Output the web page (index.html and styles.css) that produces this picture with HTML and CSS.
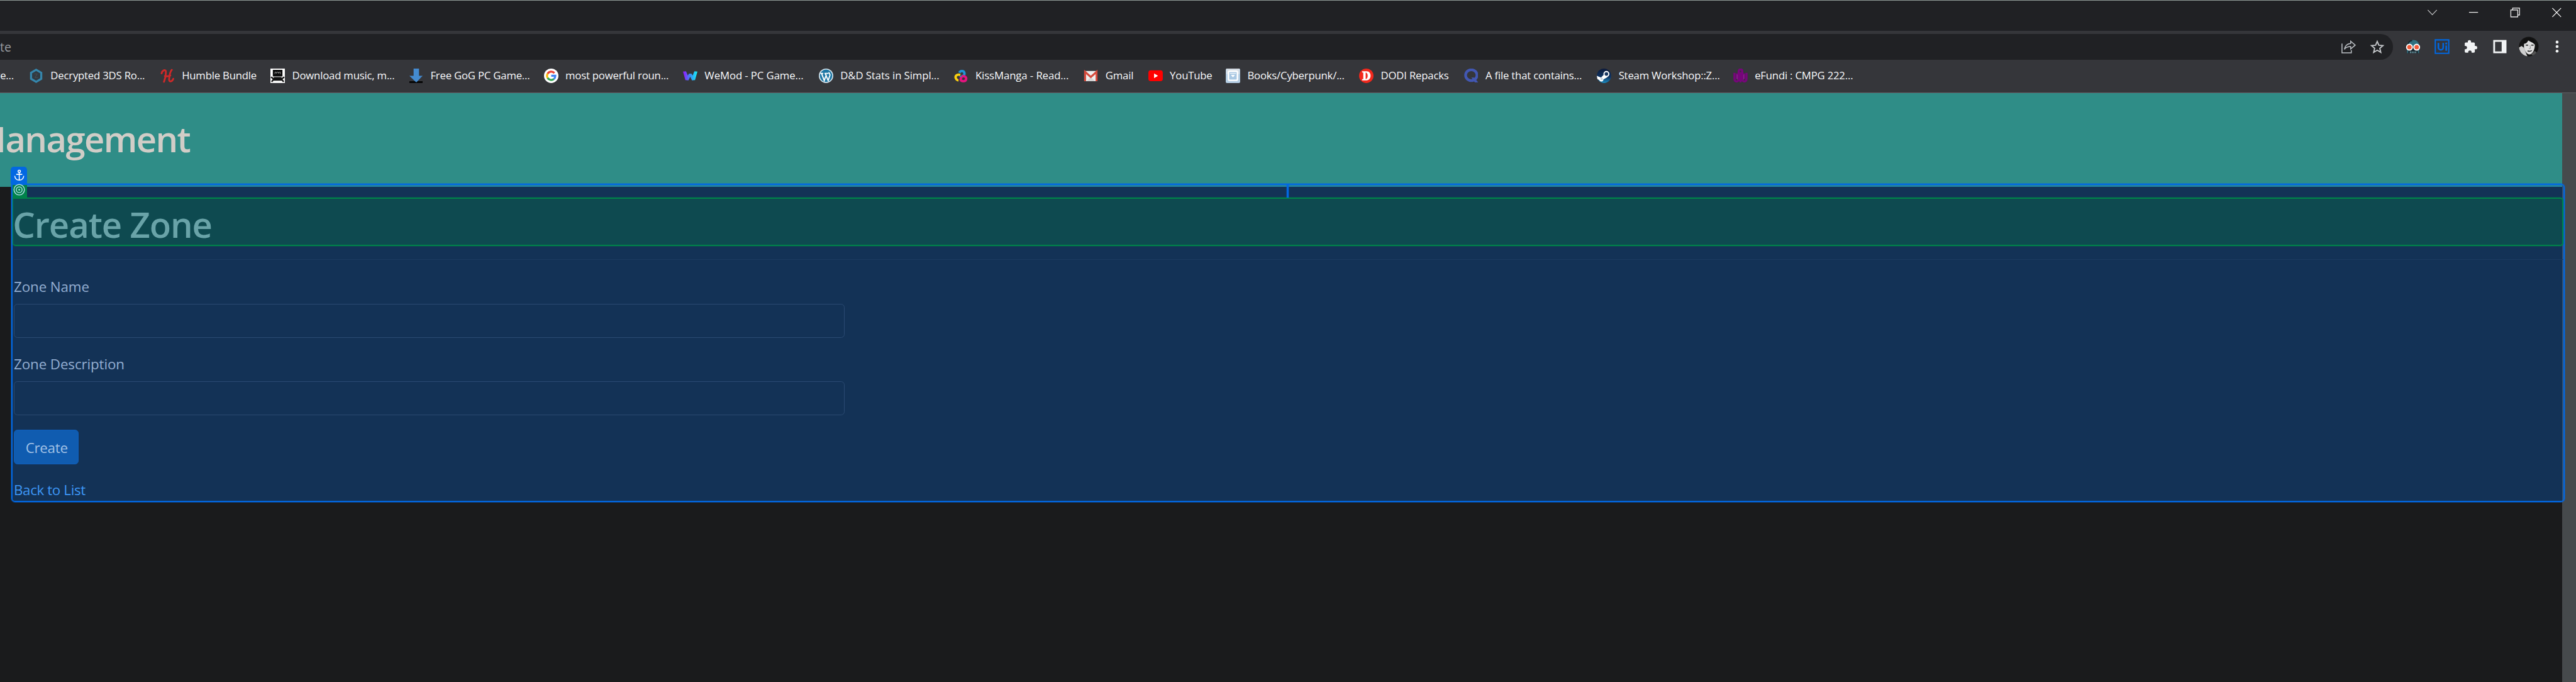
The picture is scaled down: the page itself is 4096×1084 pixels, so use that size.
FILE: index.html
```html
<!DOCTYPE html>
<html lang="en">
<head>
<meta charset="utf-8">
<title>Create Zone</title>
<link rel="stylesheet" href="styles.css">
</head>
<body>
<div class="window">
  <div class="titlebar">
    <svg class="ctl" viewBox="0 0 65 49"><path d="M25.500 15.500l7.500 8 7.500-8"/></svg>
    <svg class="ctl ctl-bright" viewBox="0 0 65 49"><path d="M25 19.500h15"/></svg>
    <svg class="ctl ctl-bright" viewBox="0 0 65 49"><path d="M25.500 15.500h11.500v11.500h-11.500zM28.500 15.500v-3h11.500v11.500h-3"/></svg>
    <svg class="ctl ctl-bright" viewBox="0 0 65 49"><path d="M25.500 12.500l14.500 14.500M40 12.500l-14.500 14.500"/></svg>
  </div>
  <div class="toolbar">
    <div class="omnibox">
      <span class="url">te</span>
      <svg class="tool" viewBox="0 0 48 42"><path d="M13.500 16v15.500H29V27" fill="none" stroke="#bdc1c6" stroke-width="1.600"/><path d="M28 12l7.500 6.500-7.500 6.500v-4c-5 0-8 1-10.500 4.500 .800-5.500 4-9 10.500-9.800z" fill="none" stroke="#bdc1c6" stroke-width="1.600"/></svg>
      <svg class="tool" viewBox="0 0 48 42"><path d="M24 12.500l2.700 6.300 6.800.600-5.200 4.500 1.600 6.700-5.900-3.600-5.900 3.600 1.600-6.700-5.200-4.500 6.800-.600z" fill="none" stroke="#c4c7ca" stroke-width="2"/></svg>
    </div>
    <div class="extensions">
      <svg class="tool" viewBox="0 0 48 42"><path d="M14 19c0-5.500 4.500-9 10-9s10 3.500 10 9v2H14z" fill="#30707f"/><path d="M15.500 17c1-4 4-6 7-6" stroke="#16232b" stroke-width="2" fill="none"/><path d="M14 24h20v8H14z" fill="#17242c"/><path d="M14 25v7h2v-7zM32 25v7h2v-7z" fill="#30707f"/><path d="M19.500 29v3M22.500 29v3M25.500 29v3M28.500 29v3" stroke="#7fb3bd" stroke-width="1.500"/><circle cx="18" cy="22" r="4.700" fill="#f15a38" stroke="#fff" stroke-width="2"/><circle cx="30" cy="22" r="4.700" fill="#f15a38" stroke="#fff" stroke-width="2"/></svg>
      <svg class="tool" viewBox="0 0 48 42"><path d="M12.800 9.800h22.400v22.400H12.800z" fill="none" stroke="#0067df" stroke-width="2.200"/><path d="M18 15v7.500a4 4 0 0 0 8 0V15M31 19v9" fill="none" stroke="#0067df" stroke-width="2.700"/><circle cx="31" cy="15.700" r="1.700" fill="#0067df"/></svg>
      <svg class="tool" viewBox="0 0 48 42"><path d="M31.800 20h-1.300v-4.200a1.800 1.800 0 0 0-1.800-1.800h-4.500v-1.200a2.700 2.700 0 0 0-5.400 0V14h-3.300a1.800 1.800 0 0 0-1.800 1.800v4h1a2.800 2.800 0 0 1 0 5.600h-1v4a1.800 1.800 0 0 0 1.800 1.800h4v-1a2.800 2.800 0 0 1 5.600 0v1h3.600a1.800 1.800 0 0 0 1.800-1.800v-4h1.300a2.700 2.700 0 0 0 0-5.400z" fill="#f1f3f4"/></svg>
      <svg class="tool" viewBox="0 0 48 42"><path d="M13 10h22v22H13z" fill="#f1f3f4"/><path d="M16 13h11v16H16z" fill="#35363a"/></svg>
      <svg class="tool" viewBox="0 0 48 42"><defs><clipPath id="face"><circle cx="24" cy="21" r="16.300"/></clipPath></defs><g clip-path="url(#face)"><path d="M7 4h34v34H7z" fill="#141414"/><path d="M16 14c3-2 5-3 8-3 5 0 10 2 10 8 0 7-4 15-9 15-4 0-8-6-9-11z" fill="#dedede"/><path d="M7 23l5-3 4 3 3 8 3 7H13z" fill="#cfcfcf"/><path d="M14 16c4 1 8-1 9-6 3 4 9 4 11 8l-1-8-8-4-9 3z" fill="#101010"/><path d="M19 18.500h4M28 18.500h4M22 28c3 1.500 5 1 7-.500" stroke="#222" stroke-width="1.500" fill="none"/><path d="M26 19l1 5h-3" stroke="#8a8a8a" fill="none"/><path d="M28 34l6-6 5 5-4 6z" fill="#555"/></g></svg>
      <svg class="tool" viewBox="0 0 48 42"><g fill="#f1f3f4"><circle cx="24" cy="13.500" r="2.400"/><circle cx="24" cy="21" r="2.400"/><circle cx="24" cy="28.500" r="2.400"/></g></svg>
    </div>
  </div>
  <div class="bookmarks">
    <div class="bm bm-cut"><span>re...</span></div>
    <div class="bm"><svg viewBox="0 0 24 24"><path d="M12 2l8.500 5v10L12 22l-8.500-5V7z" fill="#303a42" stroke="#3586ac" stroke-width="3.400"/><path d="M9 9h5l-4 6h5" fill="none" stroke="#4a4f54"/></svg><span>Decrypted 3DS Ro...</span></div>
    <div class="bm"><svg viewBox="0 0 24 24"><path d="M2 8C3 3 8 1 9 4c.500 5-1 13-3 18M19 2c-3 3-4 10-4.500 16 0 5 5 4 7-1M7.500 12.500c4 1 6 0 9-1" fill="none" stroke="#cf2929" stroke-width="3" stroke-linecap="round"/></svg><span>Humble Bundle</span></div>
    <div class="bm"><svg viewBox="0 0 24 24"><path d="M0 0h24v24H0z" fill="#fff"/><path d="M4 2h16v11H4zM6 14h12l1 2H5z" fill="#0a0a0a"/><path d="M7.500 9V6h2l.500 2 1-2h2l.500 2 1-2h2v3" fill="none" stroke="#999"/><path d="M1 14l4 3h14l4-3M2 22l4-5M22 22l-4-5M5 19h14" stroke="#111" stroke-width="2.500" fill="none"/></svg><span>Download music, m...</span></div>
    <div class="bm"><svg viewBox="0 0 24 24"><path d="M1 21h22v3H1z" fill="#050505"/><path d="M8 0h9v12h6L12.500 23 1 12h7z" fill="#448bd0"/></svg><span>Free GoG PC Game...</span></div>
    <div class="bm"><svg viewBox="0 0 24 24"><circle cx="12" cy="12" r="12" fill="#fff"/><g fill="none" stroke-width="3.400"><path d="M17.300 7.400A7 7 0 0 0 6 8.500" stroke="#ea4335"/><path d="M6 8.500a7 7 0 0 0 0 7" stroke="#fbbc05"/><path d="M6 15.500a7 7 0 0 0 10.500 1.800" stroke="#34a853"/><path d="M16.500 17.300A7 7 0 0 0 18.800 12H12" stroke="#4285f4"/></g></svg><span>most powerful roun...</span></div>
    <div class="bm bm-wide"><svg viewBox="0 0 24 24"><defs><linearGradient id="wm"><stop offset="0" stop-color="#9a10ff"/><stop offset=".5" stop-color="#3b8cf5"/><stop offset="1" stop-color="#12f4f6"/></linearGradient></defs><path d="M0 5l5-.500 3 7 2-3h4l2 3 3-7 5 .500-4 14-5 .500-3-6-3 6-5-.500z" fill="url(#wm)"/></svg><span>WeMod - PC Game...</span></div>
    <div class="bm bm-wide"><svg viewBox="0 0 24 24"><circle cx="12" cy="12" r="12" fill="#d4e5ee"/><circle cx="12" cy="12" r="10.300" fill="#1b76a4"/><path d="M2.500 8h5M9.500 8h6.500M4.500 8l4.500 12 3.500-10M10.500 8l5 12 3-9c.500-2-2-3-1.500-5" fill="none" stroke="#fff" stroke-width="2"/></svg><span>D&amp;D Stats in Simpl...</span></div>
    <div class="bm bm-wide"><svg viewBox="0 0 24 24"><g fill="none" stroke-width="4"><path d="M10 7a4.300 4.300 0 1 1 5 5.500l-4 2" stroke="#1f95d6"/><path d="M11.500 10.500C5 9 2 13 4.500 17c1 2 3 2.500 4 2.500" stroke="#f8cf10"/><path d="M14 13c5-1 8 1 7 5s-8 4-9 0c0-2 1-3 2-4" stroke="#e5147f"/></g></svg><span>KissManga - Read...</span></div>
    <div class="bm"><svg viewBox="0 0 24 24"><path d="M1 4h22v17H1z" fill="#eee"/><path d="M5 21l7-7 7 7z" fill="#d5d5d5"/><path d="M2.500 21V5.500L12 14l9.500-8.500V21" fill="none" stroke="#d54b3d" stroke-width="3.200"/></svg><span>Gmail</span></div>
    <div class="bm"><svg viewBox="0 0 24 24"><rect y="3" width="24" height="18" rx="4" fill="#f00"/><path d="M9.500 8l6.500 4-6.500 4z" fill="#fff"/></svg><span>YouTube</span></div>
    <div class="bm"><svg viewBox="0 0 24 24"><rect width="24" height="24" rx="2" fill="#b5cee4"/><path d="M1 0h22v9H1z" fill="#d5dde5"/><rect x="4.500" y="4.500" width="15" height="15" rx="2" fill="#a9c8e3" stroke="#fff" stroke-width="2.500"/><path d="M7 8h10M9.500 11h5l-2.500 3z" stroke="#fff" fill="#fff"/></svg><span>Books/Cyberpunk/...</span></div>
    <div class="bm"><svg viewBox="0 0 24 24"><circle cx="12" cy="12" r="12" fill="#f2281c"/><path d="M5 4.500h7.500c9 0 9 15 0 15H5v-2h2v-11H5zM11 6.500v11c4.500 0 4.500-11 0-11z" fill="#fff" fill-rule="evenodd"/></svg><span>DODI Repacks</span></div>
    <div class="bm"><svg viewBox="0 0 24 24"><ellipse cx="12" cy="11" rx="9.500" ry="9" fill="none" stroke="#4257b2" stroke-width="4.500"/><path d="M12 15h5l6.500 8H18z" fill="#4257b2"/></svg><span>A file that contains...</span></div>
    <div class="bm"><svg viewBox="0 0 24 24"><defs><linearGradient id="st" x2="0" y2="1"><stop offset="0" stop-color="#0d1a3a"/><stop offset=".6" stop-color="#0e3565"/><stop offset="1" stop-color="#1b8cc0"/></linearGradient></defs><circle cx="12" cy="12" r="12" fill="url(#st)"/><path d="M0 12l7 3 5-5 6 4-7 4c0 5-6 4-7 1l-3-1.500z" fill="#fff"/><circle cx="16" cy="9" r="4" fill="#17355f" stroke="#fff" stroke-width="2"/><circle cx="8" cy="17" r="2" fill="#c5d0dc"/></svg><span>Steam Workshop::Z...</span></div>
    <div class="bm"><svg viewBox="0 0 24 24"><path d="M2 7v10c0 6 7 6 7 0V5c0-5 6-5 6 0v12c0 6 7 6 7 0V7M6 8v9M18 8v9M12 6v17" fill="none" stroke="#76067a" stroke-width="3.600"/><path d="M6.500 10v8M17.500 10v8" stroke="#8a3a8f"/></svg><span>eFundi : CMPG 222...</span></div>
  </div>
  <div class="viewport">
    <main class="page">
      <header class="banner"><div class="brand">Management</div></header>
      <section class="scope">
        <div class="anchor-tag"><svg viewBox="0 0 18 20"><g fill="none" stroke="#fff" stroke-width="1.600"><circle cx="9" cy="3.500" r="2"/><path d="M9 5.500V18M4 8.500h10M1.500 11c.500 4.500 3.500 7 7.500 7s7-2.500 7.500-7"/></g></svg></div>
        <div class="target-tag"><svg viewBox="0 0 20 20"><g fill="none" stroke="#b4dcea" stroke-width="1.500"><circle cx="10" cy="10" r="8.700"/><circle cx="10" cy="10" r="4.800"/></g><circle cx="10" cy="10" r="1.400" fill="#b4dcea"/></svg></div>
        <div class="guide"></div>
        <h1 class="title">Create Zone</h1>
        <form class="form">
          <hr class="rule">
          <label class="label" for="name">Zone Name</label>
          <input class="field" id="name">
          <label class="label" for="desc">Zone Description</label>
          <input class="field" id="desc">
          <button class="submit" type="button">Create</button>
          <a class="back">Back to List</a>
        </form>
      </section>
    </main>
    <div class="scrollbar"></div>
  </div>
</div>
</body>
</html>
```

FILE: styles.css
```css
* { box-sizing: border-box; }
html, body { margin: 0; background: #1a1b1c; overflow: hidden; }
body { font-family: "Open Sans", "Noto Sans", sans-serif; }
svg { display: block; flex: none; }

.window {
  zoom: 0.9559;
  width: 4285px;
  height: 1134px;
  display: flex;
  flex-direction: column;
  overflow: hidden;
}

/* Browser chrome */
.titlebar {
  height: 51px;
  flex: none;
  display: flex;
  justify-content: flex-end;
  gap: 4px;
  background: #202124;
  border-top: 2px solid #8f9a97;
}
.ctl { width: 65px; height: 49px; fill: none; stroke: #c5c6c8; stroke-width: 1.2; }
.ctl-bright { stroke: #fff; }

.toolbar {
  height: 48px;
  flex: none;
  display: flex;
  padding-top: 6px;
  background: #35363a;
}
.omnibox {
  width: 3981px;
  display: flex;
  align-items: center;
  padding-right: 3px;
  background: #202124;
  border-radius: 0 21px 21px 0;
}
.url { flex: 1; padding-top: 2px; font-size: 20.5px; line-height: 40px; color: #9a9da1; }
.tool { width: 48px; height: 42px; }
.extensions { display: flex; margin-left: 9px; }

.bookmarks {
  height: 56px;
  flex: none;
  display: grid;
  grid-template-columns: 48px 218.5px 183.5px 230px 224.5px 231.5px 226px 224.5px 216.5px 107px 129px 222px 174px 221.5px 226.5px 220px;
  background: #35363a;
  border-bottom: 2px solid #5f6165;
}
.bm {
  display: flex;
  align-items: center;
  gap: 12px;
  white-space: nowrap;
  font-size: 17.5px;
  letter-spacing: -0.2px;
  color: #f8f9fa;
}
.bm svg { width: 24px; height: 24px; }
.bm span { padding-bottom: 2px; }
.bm-wide { letter-spacing: -0.08px; }
.bm-cut { justify-content: flex-end; padding-right: 25px; }

/* Page area */
.viewport { flex: 1; display: flex; }
.page { width: 4262px; background: #1a1b1c; }
.scrollbar { flex: 1; background: #464a4c; }

.banner { height: 156px; padding-top: 41px; background: #2f8d87; }
.brand {
  width: 316px;
  display: flex;
  justify-content: flex-end;
  font-size: 58.8px;
  line-height: 70px;
  font-weight: 600;
  letter-spacing: -1.7px;
  color: #d1cdc7;
}

.scope {
  position: relative;
  height: 530px;
  margin: -6px -4px 0 19px;
  border: 3px solid #0268e2;
  border-radius: 0 6px 6px 6px;
  background: rgba(2, 107, 223, 0.3);
  background-clip: padding-box;
  box-shadow: 0 0 0 1px rgba(2, 104, 226, 0.45);
  padding: 21px 0 0 0;
}
.anchor-tag, .target-tag {
  position: absolute;
  display: flex;
  justify-content: center;
}
.anchor-tag {
  left: -3px;
  top: -30px;
  width: 27px;
  height: 28px;
  padding-top: 4px;
  border-radius: 5px 5px 0 0;
  background: #0268e2;
}
.anchor-tag svg { width: 18px; height: 20px; }
.target-tag {
  left: 0;
  top: 0;
  width: 24px;
  height: 21px;
  padding-right: 3px;
  background: #00824a;
}
.target-tag svg { width: 20px; height: 20px; margin-top: -2px; }
.guide {
  position: absolute;
  left: 2119px;
  top: 0;
  width: 3px;
  height: 21px;
  background: #0268e2;
  box-shadow: 0 0 0 1px rgba(2, 104, 226, 0.3);
}

.title {
  height: 81px;
  margin: 0;
  padding-top: 8px;
  border: 3px solid #00824a;
  border-left-width: 1px;
  border-radius: 0 5px 5px 5px;
  box-shadow: 0 0 0 1px rgba(0, 130, 74, 0.3);
  background: #0e4a50;
  font-size: 58.8px;
  line-height: 71px;
  font-weight: 600;
  letter-spacing: -1.15px;
  text-indent: -1px;
  color: #69a3a8;
}

.form {
  display: flex;
  flex-direction: column;
  align-items: flex-start;
  padding-left: 2px;
  padding-top: 22px;
  font-size: 23.4px;
  letter-spacing: -0.12px;
}
.rule { width: 100%; height: 1px; margin: 0 0 27px; border: 0; background: #1b3b60; }
.label { line-height: 36px; color: #93aed2; }
.field {
  width: 1382px;
  height: 57px;
  margin: 10px 0 26px;
  border: 1px solid #2a4a72;
  border-radius: 6px;
  background: transparent;
}
.submit {
  width: 108px;
  height: 57px;
  margin-top: -2px;
  padding: 2px 0 0 1px;
  border: 1px solid #1060bc;
  border-radius: 6px;
  background: #105cb0;
  font: inherit;
  letter-spacing: -0.3px;
  color: #a3c2e6;
}
.back { margin-top: 26px; line-height: 34px; letter-spacing: -0.4px; color: #3d96f5; }
```
